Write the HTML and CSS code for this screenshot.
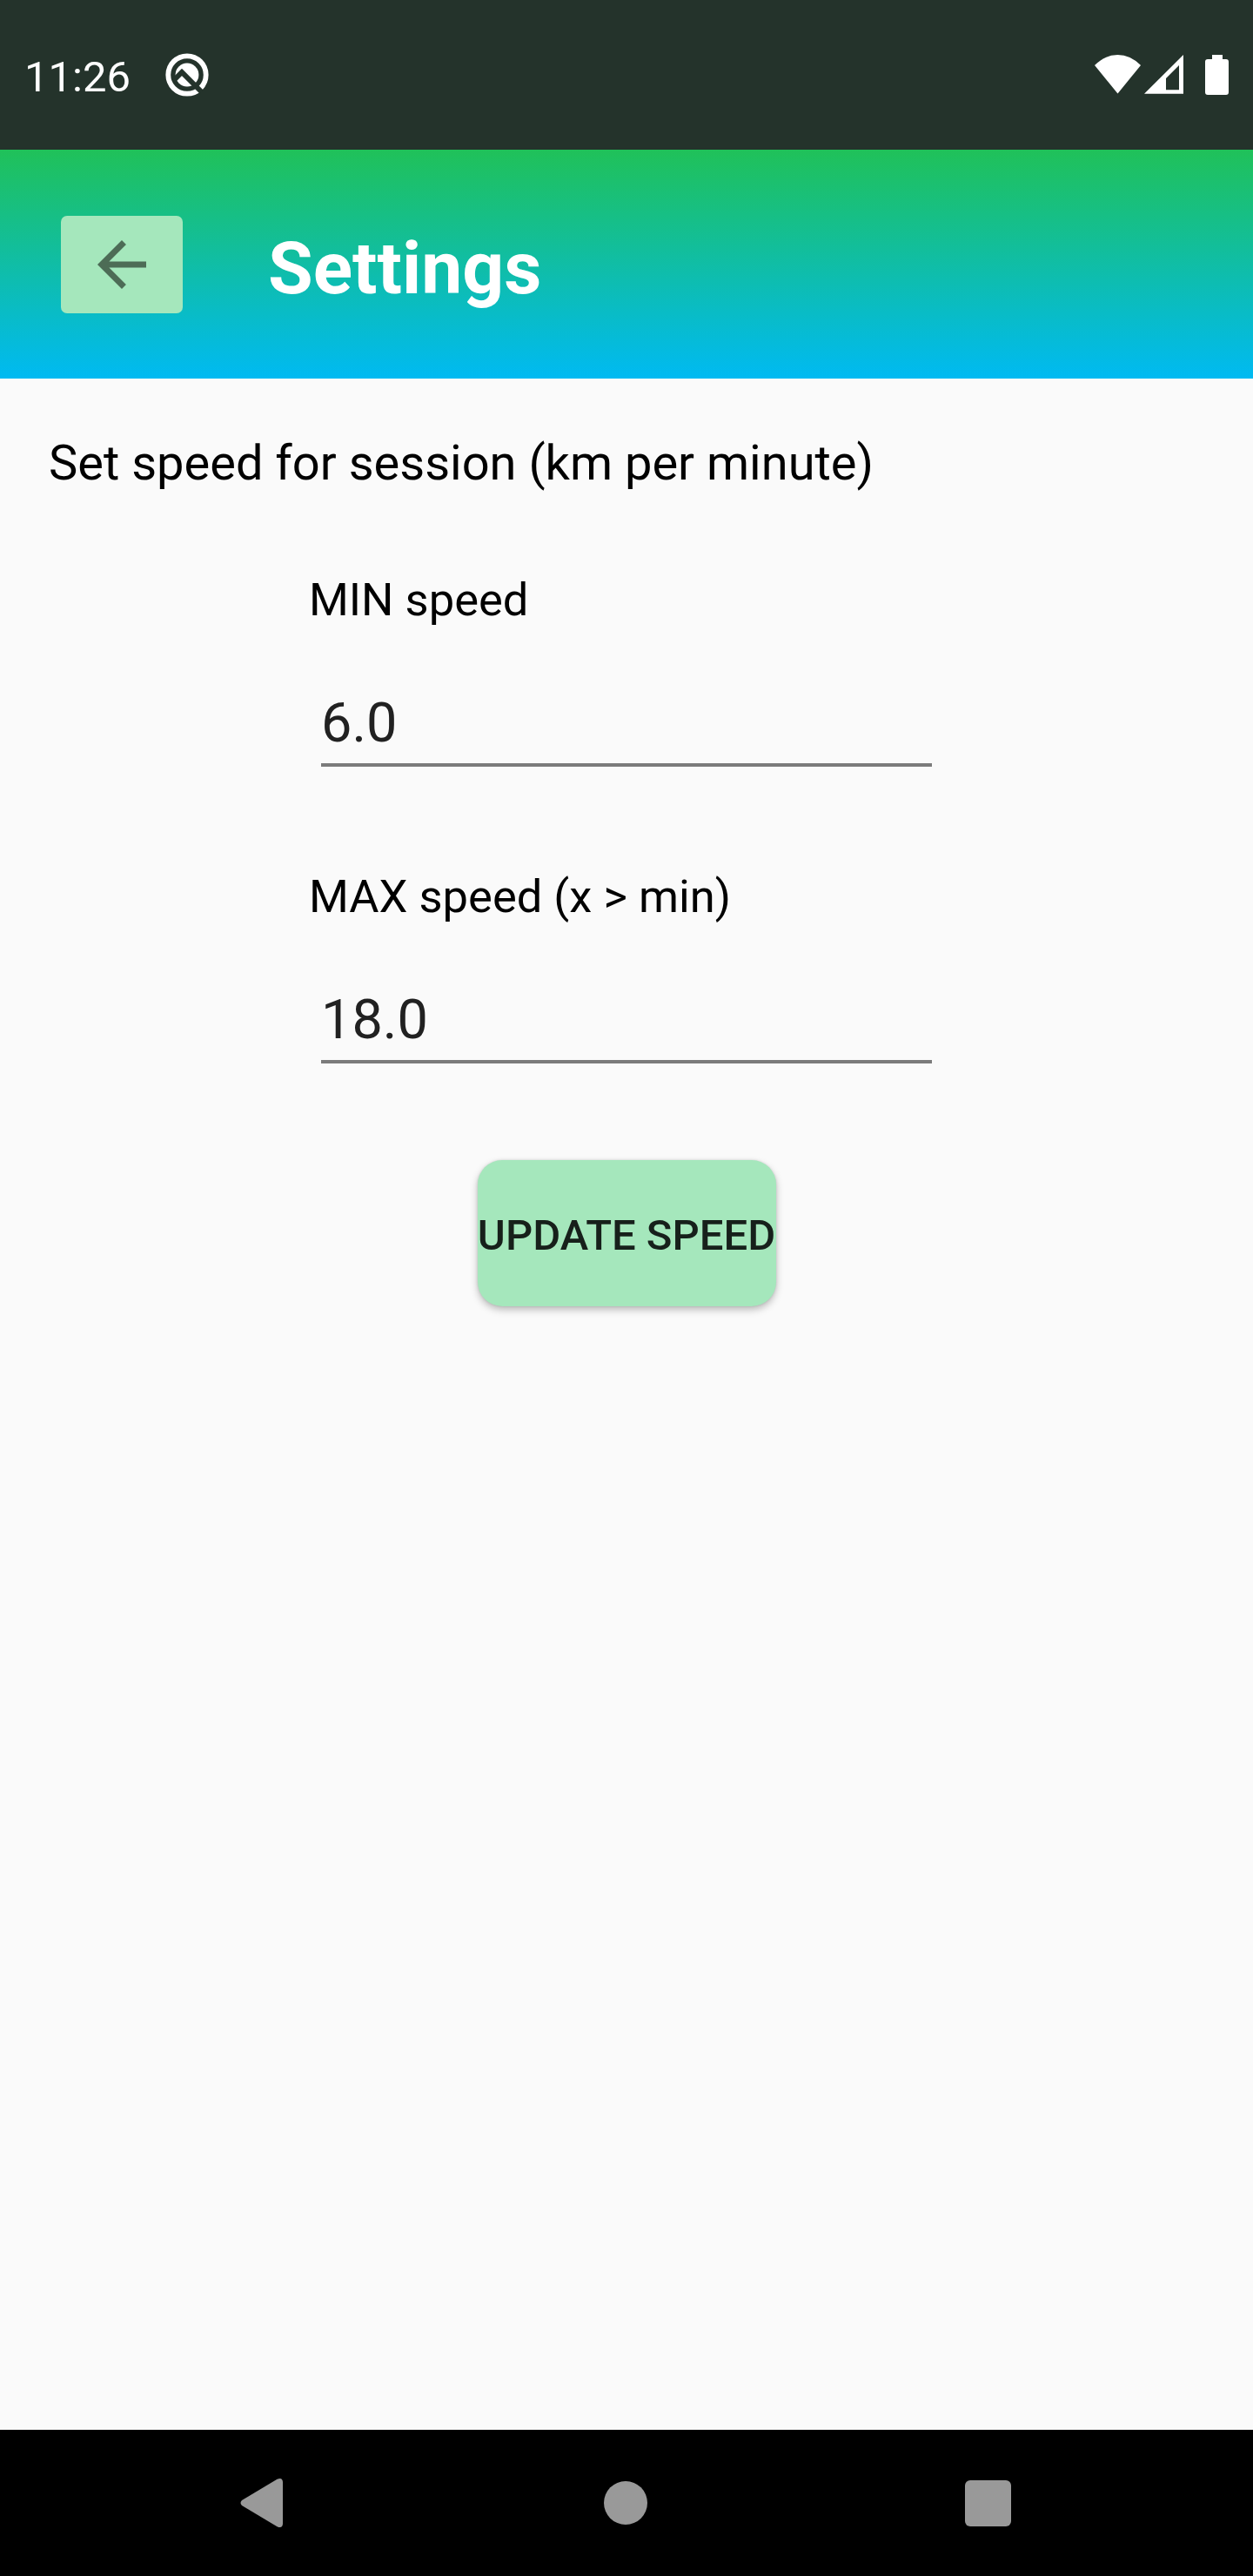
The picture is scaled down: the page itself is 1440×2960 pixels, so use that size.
FILE: index.html
```html
<!DOCTYPE html>
<html lang="en">
<head>
<meta charset="utf-8">
<title>Settings</title>
<link rel="stylesheet" href="styles.css">
</head>
<body>
<div class="screen">
  <div class="status">
    <span class="time">11:26</span>
    <svg class="notice" width="50" height="50" viewBox="0 0 50 50">
      <circle cx="25" cy="25" r="21.7" fill="none" stroke="#fff" stroke-width="5.8"/>
      <circle cx="25" cy="25" r="13.4" fill="#fff"/>
      <path d="M9 32L19 22L42 45" fill="none" stroke="#24332b" stroke-width="6"/>
    </svg>
    <div class="indicators">
      <svg width="156" height="50" viewBox="0 0 156 50" fill="#fff">
        <path d="M0 13Q12 1 26.500 1T53 13L26.500 45.500Z"/>
        <path fill-rule="evenodd" d="M57 45.700L102 1V45.700ZM82 28V41.300H97V13Z"/>
        <path d="M135 1h12v5h4q3 0 3 3v35q0 3-3 3h-21q-3 0-3-3V9q0-3 3-3h5z"/>
      </svg>
    </div>
  </div>
  <header class="header">
    <button class="back" aria-label="Back">
      <svg width="84" height="84" viewBox="0 0 24 24"><path fill="#4d6c56" d="M20 11H7.830l5.590-5.590L12 4l-8 8 8 8 1.410-1.410L7.830 13H20v-2z"/></svg>
    </button>
    <h1 class="title">Settings</h1>
  </header>
  <main class="content">
    <p class="intro">Set speed for session (km per minute)</p>
    <div class="field">
      <label class="label" for="min">MIN speed</label>
      <input class="input" id="min" value="6.0">
    </div>
    <div class="field">
      <label class="label" for="max">MAX speed (x &gt; min)</label>
      <input class="input" id="max" value="18.0">
    </div>
    <button class="update">UPDATE SPEED</button>
  </main>
  <nav class="nav">
    <svg width="53" height="58" viewBox="0 0 53 58"><path d="M42.500 1.800Q48.500 -1 49 5V53Q48.500 59 42.500 56.200L2 32Q-1 29 2 26Z" fill="#999"/></svg>
    <svg width="50" height="50" viewBox="0 0 50 50"><ellipse cx="25" cy="25" rx="25" ry="25" fill="#999"/></svg>
    <svg width="53" height="53" viewBox="0 0 53 53"><rect width="53" height="53" rx="6" fill="#999"/></svg>
  </nav>
</div>
</body>
</html>
```
FILE: styles.css
```css
* { box-sizing: border-box; }
body { margin: 0; font-family: Roboto, sans-serif; }
button, input { font-family: inherit; border: 0; padding: 0; margin: 0; }
svg { display: block; flex: none; }

.screen {
  width: 1440px;
  height: 2960px;
  display: flex;
  flex-direction: column;
  background: #fafafa;
}

.status {
  height: 172px;
  padding: 2px 26px 0 28px;
  display: flex;
  align-items: center;
  background: #24332b;
}
.time { margin-top: 3px; font-size: 49px; line-height: 58px; color: #fff; }
.notice { margin: 0 0 2px 40px; }
.indicators { margin-left: auto; }

.header {
  height: 263px;
  padding: 0 70px;
  display: flex;
  align-items: center;
  gap: 98px;
  background: linear-gradient(#20c159, #00baf2);
}
.back {
  width: 140px;
  height: 112px;
  display: grid;
  place-items: center;
  border-radius: 7px;
  background: #a5e7bc;
}
.title { margin: 10px 0 0; font-size: 84px; line-height: 100px; font-weight: 700; color: #fff; }

.content { flex: 1; padding: 64px 56px 0; display: flex; flex-direction: column; }
.intro { margin: 0 0 93px; font-size: 56px; line-height: 66px; color: #000; }
.field { width: 730px; height: 341px; align-self: center; display: flex; flex-direction: column; }
.label { font-size: 52.5px; line-height: 62px; color: #000; }
.input {
  margin: 74px 14px 0;
  height: 87px;
  padding-bottom: 11px;
  font-size: 63px;
  color: #212121;
  background: transparent;
  border-bottom: 4px solid #7b7b7b;
}
.update {
  width: 343px;
  height: 168px;
  margin-top: -7px;
  padding-top: 4px;
  align-self: center;
  border-radius: 28px;
  font-size: 49px;
  font-weight: 500;
  white-space: nowrap;
  color: #17201b;
  background: #a5e7bc;
  box-shadow: 0 4px 9px rgba(0, 0, 0, .25), 0 0 3px rgba(0, 0, 0, .12);
}

.nav {
  height: 168px;
  padding: 0 278px 0 276px;
  display: flex;
  align-items: center;
  justify-content: space-between;
  background: #000;
}
```
